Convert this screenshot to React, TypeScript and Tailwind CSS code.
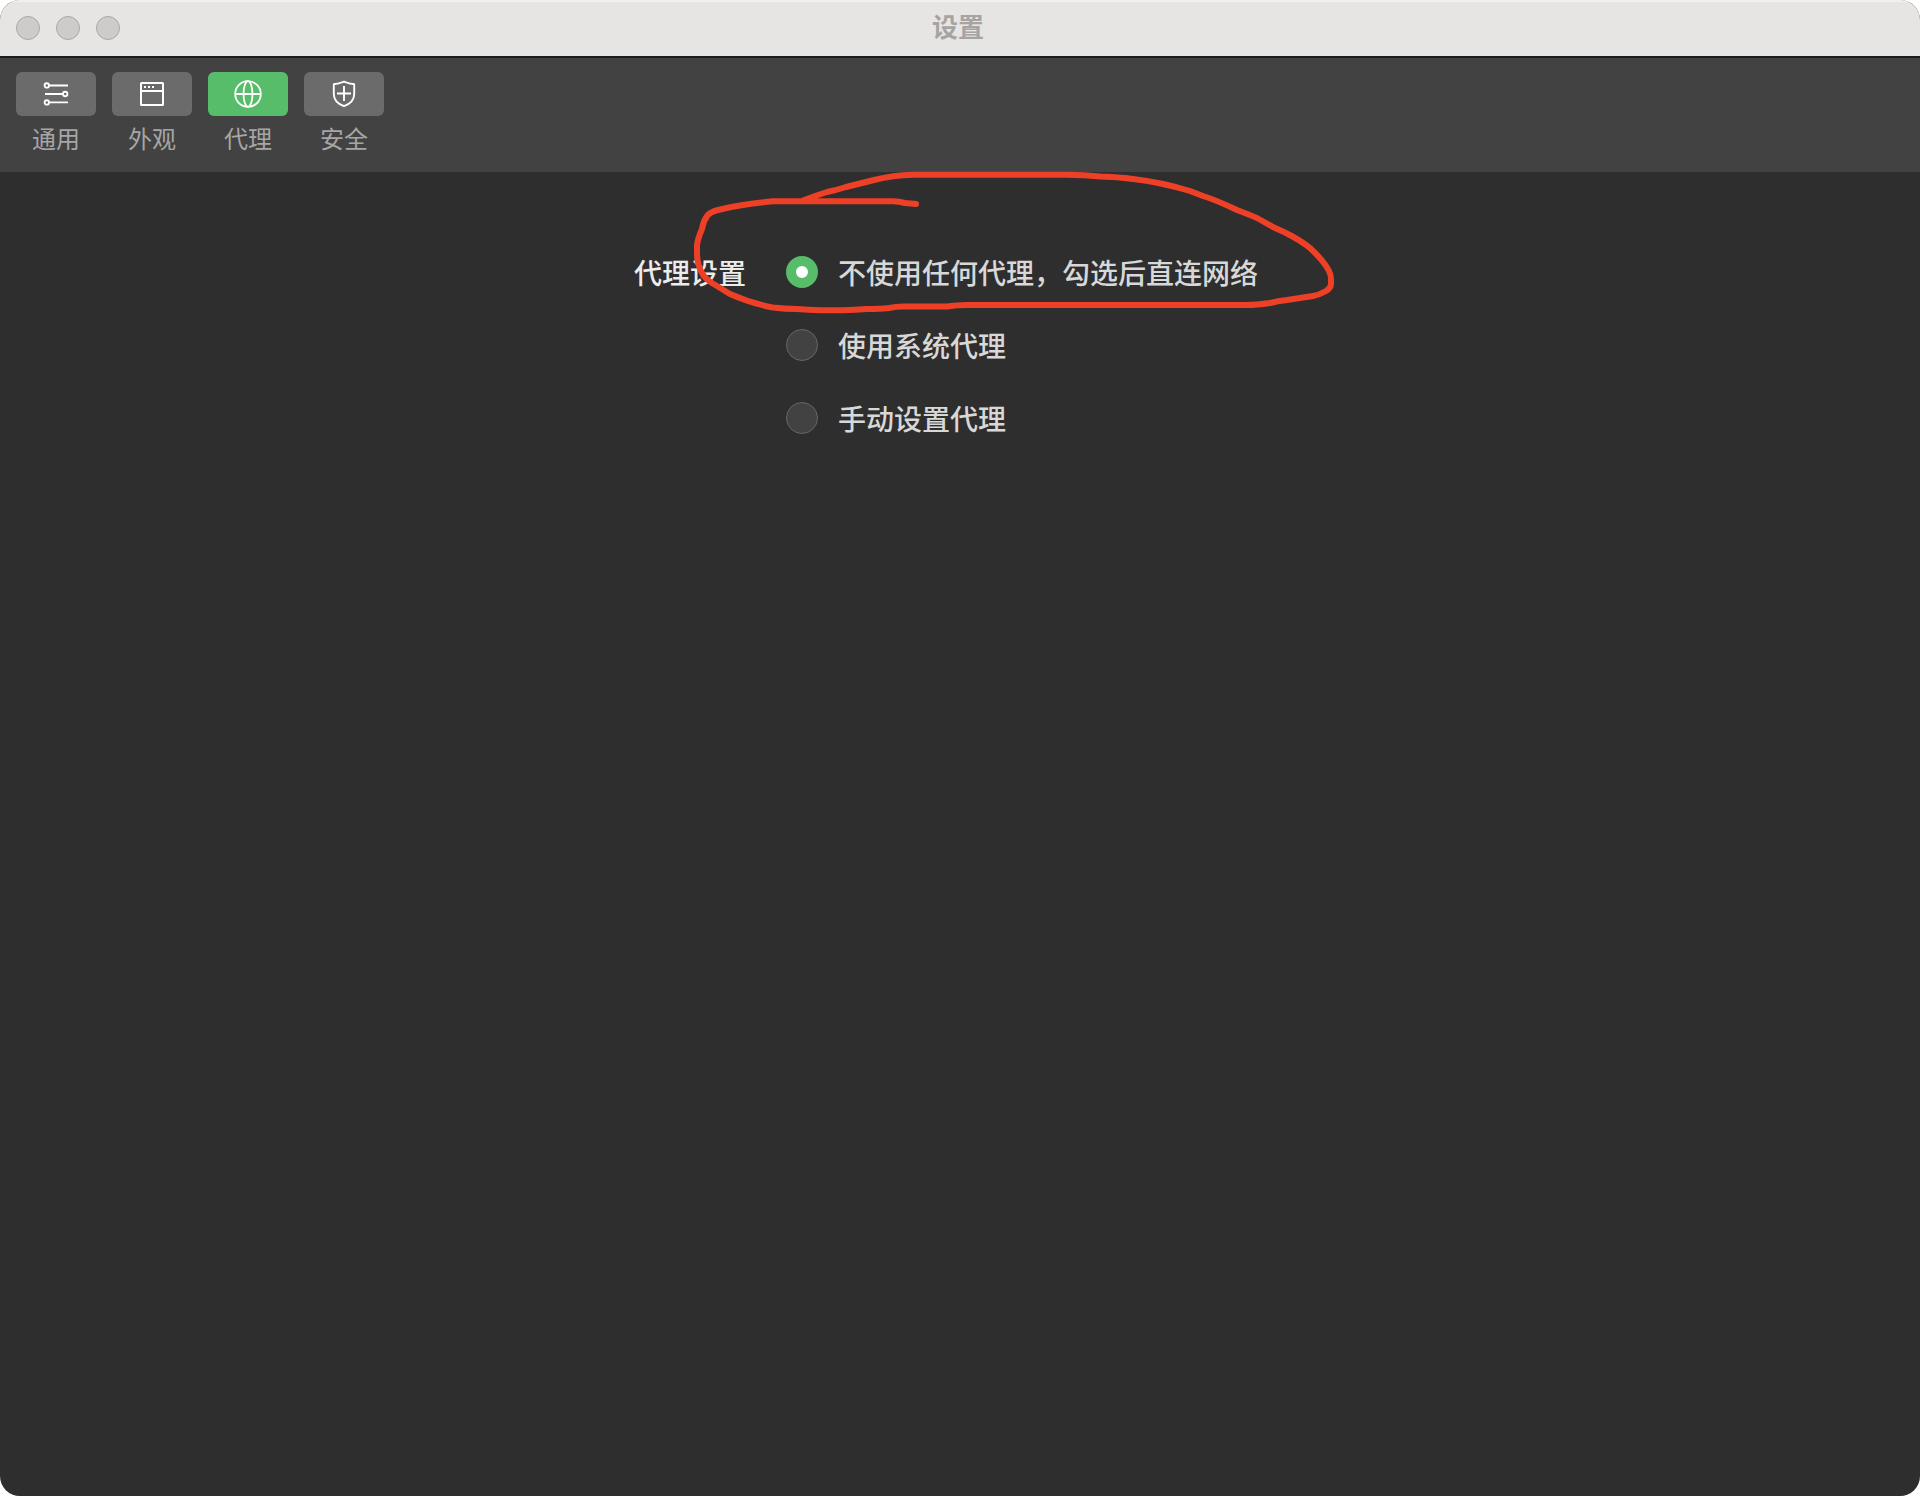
import React, { useState } from "react";

function SlidersIcon() {
  return (
    <svg width="26" height="26" viewBox="0 0 26 26" fill="none" stroke="currentColor" strokeWidth="1.9" aria-hidden="true">
      <circle cx="3.8" cy="4.4" r="2.2" />
      <path d="M6.200 4.500H25" />
      <circle cx="22.200" cy="13" r="2.200" />
      <path d="M2 13H19.800" />
      <circle cx="3.800" cy="21.400" r="2.200" />
      <path d="M6.200 21.400H25" />
    </svg>
  );
}

function WindowIcon() {
  return (
    <svg width="26" height="26" viewBox="0 0 26 26" fill="none" stroke="currentColor" strokeWidth="2" aria-hidden="true">
      <rect x="2" y="2" width="22" height="22" rx="0.5" />
      <path d="M2 10H24" />
      <path d="M5 6H7M9 6H11M13 6H15" />
    </svg>
  );
}

function GlobeIcon() {
  return (
    <svg width="28" height="28" viewBox="0 0 28 28" fill="none" stroke="currentColor" strokeWidth="1.8" aria-hidden="true">
      <circle cx="14" cy="14" r="12.8" />
      <ellipse cx="14" cy="14" rx="4.500" ry="12.800" />
      <path d="M1 14H27" />
    </svg>
  );
}

function ShieldIcon() {
  return (
    <svg width="28" height="28" viewBox="0 0 28 28" fill="none" stroke="currentColor" strokeWidth="1.9" strokeLinejoin="round" aria-hidden="true">
      <path d="M14 1.700C17.500 3.200 20.500 4 24.200 4.300V14C24.200 20 20.500 23.800 14 26.200C7.500 23.800 3.800 20 3.800 14V4.300C7.500 4 10.500 3.200 14 1.700Z" />
      <path d="M14 6V21M7 13.500H21" />
    </svg>
  );
}

const tabs = [
  { id: "general", label: "通用", Icon: SlidersIcon },
  { id: "appearance", label: "外观", Icon: WindowIcon },
  { id: "proxy", label: "代理", Icon: GlobeIcon },
  { id: "security", label: "安全", Icon: ShieldIcon },
];

const options = [
  { id: "none", label: "不使用任何代理，勾选后直连网络" },
  { id: "system", label: "使用系统代理" },
  { id: "manual", label: "手动设置代理" },
];

function TitleBar() {
  return (
    <header className="grid h-14 grid-cols-[1fr_auto_1fr] items-center bg-[#e6e5e3] pr-5 pl-4 shadow-[inset_0_2px_0_#f1f0ef]">
      <div className="flex gap-4">
        <button type="button" aria-label="关闭" className="size-6 rounded-full border border-[#a9a8a6] bg-[#cdccca]" />
        <button type="button" aria-label="最小化" className="size-6 rounded-full border border-[#a9a8a6] bg-[#cdccca]" />
        <button type="button" aria-label="缩放" className="size-6 rounded-full border border-[#a9a8a6] bg-[#cdccca]" />
      </div>
      <h1 className="pb-1 text-[26px] leading-8 font-bold text-[#a5a4a2]">设置</h1>
    </header>
  );
}

function Toolbar({ active, onSelect }: { active: string; onSelect: (id: string) => void }) {
  return (
    <nav className="flex gap-4 border-t-2 border-[#1c1c1c] bg-[#424242] px-4 pt-3.5 pb-4.5">
      {tabs.map(({ id, label, Icon }) => (
        <button
          key={id}
          type="button"
          aria-current={id === active ? "page" : undefined}
          onClick={() => onSelect(id)}
          className="flex w-20 flex-col items-center gap-1.5"
        >
          <span
            className={
              id === active
                ? "flex h-11 w-full items-center justify-center rounded-md bg-[#57bd6a] text-white"
                : "flex h-11 w-full items-center justify-center rounded-md bg-[#6b6b6b] text-white"
            }
          >
            <Icon />
          </span>
          <span className="text-2xl leading-8 text-[#a6a6a6]">{label}</span>
        </button>
      ))}
    </nav>
  );
}

function Annotation() {
  return (
    <svg
      className="pointer-events-none absolute -top-21 left-14"
      width="650"
      height="150"
      viewBox="690 168 650 150"
      fill="none"
      stroke="#ee4026"
      strokeWidth="6"
      strokeLinecap="round"
      strokeLinejoin="round"
      aria-hidden="true"
    >
      <path d="M803 200.500Q814 196 827 192Q837 190 846 187Q862 183 874 180Q893 175 913 174.700H1067Q1084 175 1100 176.500Q1118 177 1133 179Q1160 182 1190 191L1203 196Q1216 200 1237 210Q1250 215 1257 218L1273 227L1285 232.500Q1300 240 1310 248Q1324 261 1329 271Q1331 275 1331 279V284Q1331 288 1326 291Q1319 295 1313 296Q1300 298 1287 300Q1277 301 1270 303Q1256 305 1247 305H967Q957 305 947 306.500H903Q896 306.500 889 308Q880 309 867 309Q855 310 843 310.300H820Q808 310 797 309Q785 309 773 307.500Q750 303 730 294L712 283Q702 277 699 266Q697 261 697 252V245Q698 238 702 229Q703 222 707 216Q710 212 718 210Q729 207 743 205Q756 203 773 201.300H893Q899 201.500 905 203L916 204" />
    </svg>
  );
}

export default function App() {
  const [tab, setTab] = useState("proxy");
  const [mode, setMode] = useState("none");

  return (
    <div className="bg-white font-['Noto_Sans_CJK_SC',sans-serif]">
      <div className="flex min-h-screen flex-col overflow-hidden rounded-[20px] bg-[#2e2e2e]">
        <TitleBar />
        <Toolbar active={tab} onSelect={setTab} />
        <main className="flex justify-center pt-20 pr-7">
          <div role="radiogroup" aria-labelledby="proxy-label" className="relative flex items-start gap-10">
            <h2 id="proxy-label" className="text-[28px] leading-10 font-medium text-[#ececec]">
              代理设置
            </h2>
            <div className="flex flex-col gap-[33px]">
              {options.map(({ id, label }) => (
                <label key={id} className="flex items-center gap-5 text-[28px] leading-10 font-medium text-[#d8d8d8]">
                  <input
                    type="radio"
                    name="proxy"
                    value={id}
                    checked={mode === id}
                    onChange={() => setMode(id)}
                    className="size-8 appearance-none rounded-full border border-[#666666] bg-[#424242] checked:border-[10px] checked:border-[#57bd6a] checked:bg-white"
                  />
                  {label}
                </label>
              ))}
            </div>
            <Annotation />
          </div>
        </main>
      </div>
    </div>
  );
}
